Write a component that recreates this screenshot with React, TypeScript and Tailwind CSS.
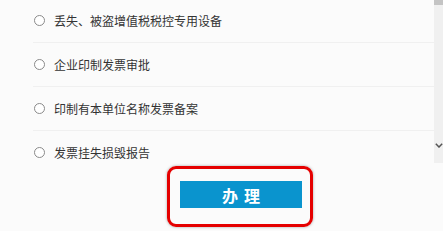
import React from "react";

const items = [
  "丢失、被盗增值税税控专用设备",
  "企业印制发票审批",
  "印制有本单位名称发票备案",
  "发票挂失损毁报告",
];

export default function App() {
  return (
    <div
      className="w-[443px] h-[231px] bg-[#fbfbfb] overflow-hidden flex flex-col"
      style={{ fontFamily: '"Noto Sans CJK SC", "Noto Sans", sans-serif' }}
    >
      <div className="flex h-[163px] shrink-0">
        <div className="flex-1 overflow-hidden">
          <div className="-mt-px">
            {items.map((t) => (
              <div
                key={t}
                className="ml-[33px] h-[44px] border-b border-[#f0f0f0] flex items-center"
              >
                <span className="ml-[1px] w-[11px] h-[11px] rounded-full border border-[#8a8a8a] bg-white shrink-0" />
                <span className="ml-[9px] text-[12px] leading-[14px] text-[#333333]">
                  {t}
                </span>
              </div>
            ))}
          </div>
        </div>
        <div className="w-[9px] bg-[#f0f0f0] flex flex-col justify-between">
          <div className="h-[5px] bg-[#c4c4c4]" />
          <div className="mb-[15px] flex justify-start pl-[1px]">
            <svg width="8" height="5" viewBox="0 0 8 5">
              <path d="M0.8 0.8 L4 4 L7.2 0.8" fill="none" stroke="#555" strokeWidth="1.5" />
            </svg>
          </div>
        </div>
      </div>
      <div className="ml-[167px] mt-[3px] w-[146px] h-[61px] rounded-[9px] border-[3px] border-[#e50000] shadow-[0_0_3px_rgba(0,0,0,0.35)] pl-[10px] pt-[12px]">
        <div className="w-[122px] h-[27px] bg-[#0a94ce] flex items-center justify-center">
          <span className="text-white font-bold text-[16px] leading-[16px] tracking-[6px] pl-[6px]">
            办理
          </span>
        </div>
      </div>
    </div>
  );
}
